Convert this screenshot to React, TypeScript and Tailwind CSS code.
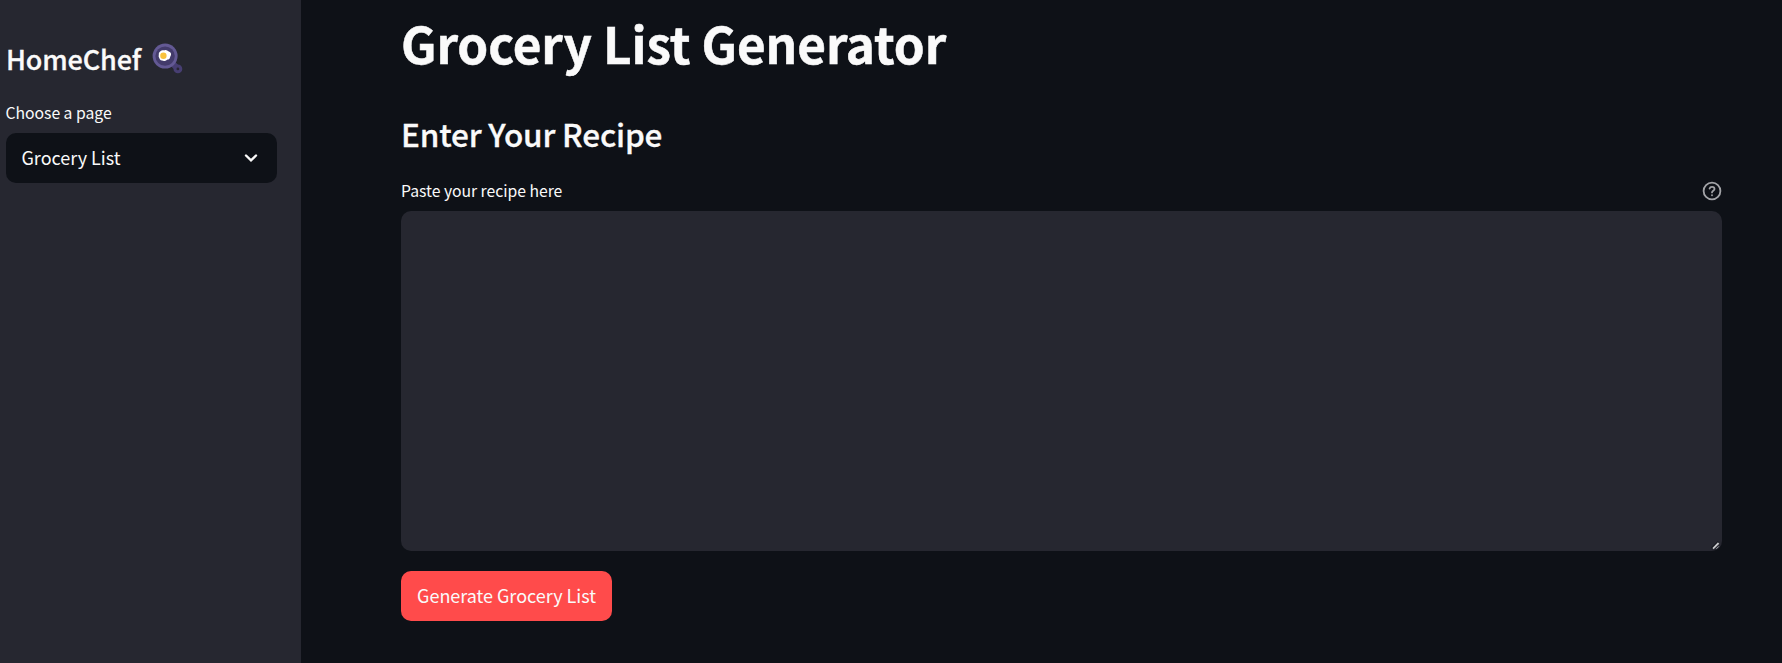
import React from "react";

function PanEmoji() {
  return (
    <svg className="-mt-[1px] h-[31px] w-[31px] shrink-0" viewBox="0 0 31 31" aria-hidden="true">
      <path d="M20.4 20.4 L25.4 25.4" stroke="#473e72" strokeWidth="6" />
      <circle cx="25.9" cy="25.9" r="2.9" fill="#292634" stroke="#473e72" strokeWidth="3" />
      <circle cx="13.1" cy="13.1" r="12.5" fill="#635994" />
      <circle cx="13.1" cy="13.1" r="9.7" fill="#433b6b" />
      <path
        d="M8.2 8.4 C9.5 6.8 11.3 7.5 12.8 7.2 C14.6 6.7 15.4 8 16.8 8.6 C18.2 9 19.5 10.5 19 12 C18.6 13 18.2 13.6 18 14.4 C17.7 16 16.8 16.3 15.6 16.5 C14.4 17.8 12 18.5 10 17.6 C8 17.2 7.7 15.8 7 14.4 C6.2 13.2 7 12.2 6.8 11.2 C6.7 9.9 7.2 9 8.2 8.4 Z"
        fill="#ffffff"
      />
      <circle cx="11.4" cy="12.8" r="3.2" fill="#f9c23c" />
    </svg>
  );
}

function Sidebar() {
  return (
    <aside className="flex h-full w-[301px] shrink-0 flex-col bg-[#262730] pl-[6px] pr-6 pt-[39px]">
      <div className="flex h-10 items-center">
        <h2 className="w-[146px] whitespace-nowrap text-[27px] font-medium leading-10 tracking-[-0.15px] [-webkit-text-stroke:0.3px_#fafafa]">
          HomeChef
        </h2>
        <PanEmoji />
      </div>
      <label className="-ml-[0.5px] mt-[21px] h-[33px] text-[15.75px] leading-[26px] tracking-[-0.03px]">Choose a page</label>
      <div className="flex h-[50px] items-center justify-between rounded-[10px] bg-[#0e1117] pl-[15.5px] pr-[19px] text-[18px] leading-7">
        <span className="pb-[2px] tracking-[-0.03px]">Grocery List</span>
        <svg className="h-[14px] w-[14px]" viewBox="0 0 14 14" fill="none" aria-hidden="true">
          <path d="M2 4.5 L7 9.4 L12 4.5" stroke="#fafafa" strokeWidth="2.4" strokeLinecap="round" />
        </svg>
      </div>
    </aside>
  );
}

export default function App() {
  return (
    <div className="flex h-[663px] w-[1782px] overflow-hidden bg-[#0e1117] font-['Noto_Sans_CJK_JP','Noto_Sans_CJK_SC',sans-serif] text-[#fafafa]">
      <Sidebar />
      <main className="flex min-w-0 flex-1 flex-col pl-[100px] pr-[60px] pt-[10px]">
        <h1 className="h-[66px] whitespace-nowrap text-[49.5px] font-bold leading-[66px] tracking-[-0.1px] [-webkit-text-stroke:0.5px_#fafafa]">
          Grocery List Generator
        </h1>
        <h2 className="mt-[36px] h-[42px] text-[31.5px] font-medium leading-[42px] tracking-[-0.17px] [-webkit-text-stroke:0.3px_#fafafa]">
          Enter Your Recipe
        </h2>
        <div className="mt-[24px] flex h-[33px] items-start justify-between">
          <label className="text-[15.75px] leading-[26px] tracking-[-0.03px]">Paste your recipe here</label>
          <svg className="mt-[3px] h-5 w-5" viewBox="0 0 20 20" fill="none" stroke="#a3a4a8" strokeWidth="1.8" strokeLinecap="round" aria-hidden="true">
            <circle cx="10" cy="10" r="8.4" />
            <path d="M7.6 7.6 C8 6.2 9 5.8 10 5.8 C11.5 5.8 12.5 6.7 12.5 7.9 C12.5 9.6 10 9.8 10 11.4" />
            <path d="M10 14.2 L10 14.25" />
          </svg>
        </div>
        <div className="flex h-[340px] items-end justify-end rounded-[10px] bg-[#262730]">
          <svg className="mb-[1px] mr-[2px] h-[9px] w-[9px]" viewBox="0 0 9 9" fill="none" aria-hidden="true">
            <path d="M0.7 7.3 L7.3 0.7" stroke="#0e1117" strokeWidth="1.6" />
            <path d="M2 7.6 L7.6 2" stroke="#c9c9cb" strokeWidth="1.8" />
            <path d="M5.4 7.8 L7.8 5.4" stroke="#c9c9cb" strokeWidth="0.8" />
          </svg>
        </div>
        <button className="mt-5 h-[50px] w-[211px] whitespace-nowrap rounded-[10px] bg-[#ff4b4b] pb-[2px] text-[18px] leading-7 tracking-[-0.03px]">
          Generate Grocery List
        </button>
      </main>
    </div>
  );
}
